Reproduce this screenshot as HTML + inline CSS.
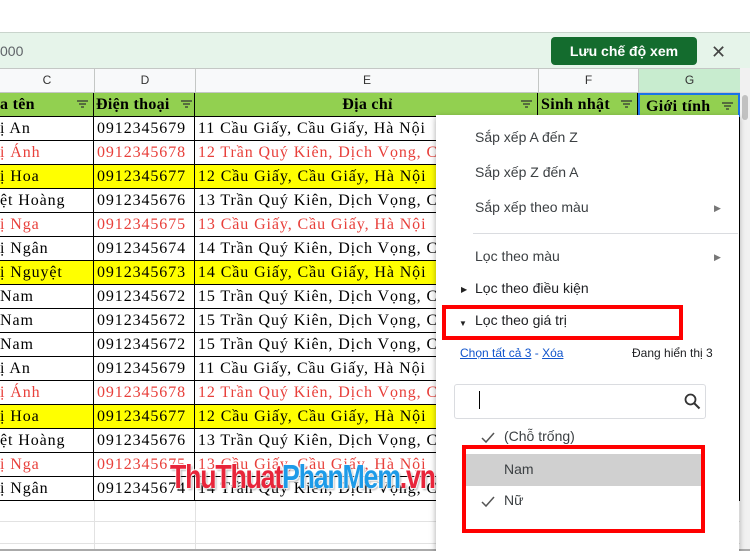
<!DOCTYPE html><html><head><meta charset="utf-8"><style>
*{box-sizing:border-box;margin:0;padding:0}
body{width:750px;height:551px;overflow:hidden;position:relative;background:#fff;font-family:"Liberation Sans",sans-serif}
.abs{position:absolute}
.row{position:absolute;left:0;width:740px;height:24px;font-family:"Liberation Serif",serif;font-size:16px;letter-spacing:0.9px;line-height:23px}
.row div{position:absolute;top:0;height:24px;border-right:1.5px solid #000;border-bottom:1.5px solid #000;padding-left:3px;white-space:nowrap;overflow:hidden}
.c{left:-20px;width:114px}.d{left:94px;width:101px}.e{left:195px;width:343px}.f{left:538px;width:100px}.g{left:638px;width:102px}
.y div{background:#ffff00}.r{color:#e8403b}
.fi{position:absolute;right:5px;top:6px;width:11px;height:10px}
.mi{position:absolute;left:475px;font-size:14px;color:#3c4043}
</style></head><body>
<div class="abs" style="left:0;top:0;width:750px;height:33px;background:#fff;border-bottom:1px solid #c9d4cc"></div>
<div class="abs" style="left:0;top:33px;width:750px;height:35px;background:#e6f4ea"></div>
<div class="abs" style="left:0;top:43px;font-size:14px;color:#5f6368">000</div>
<div class="abs" style="left:551px;top:37px;width:146px;height:28px;background:#146c2e;border-radius:4px;color:#fff;font-size:14px;font-weight:bold;text-align:center;line-height:28px">Lưu chế độ xem</div>
<div class="abs" style="left:711px;top:42px;font-size:18px;color:#444">✕</div>
<div class="abs" style="left:0;top:68px;width:740px;height:25px;background:#f8f9fa;border-top:1px solid #c4c7c5;border-bottom:1px solid #c4c7c5;font-size:12px;color:#333">
<div class="abs" style="left:0;width:94px;text-align:center;line-height:23px">C</div>
<div class="abs" style="left:94px;width:101px;border-left:1px solid #c4c7c5;height:23px;text-align:center;line-height:23px">D</div>
<div class="abs" style="left:195px;width:343px;border-left:1px solid #c4c7c5;height:23px;text-align:center;line-height:23px">E</div>
<div class="abs" style="left:538px;width:100px;border-left:1px solid #c4c7c5;height:23px;text-align:center;line-height:23px">F</div>
<div class="abs" style="left:638px;width:102px;border-left:1px solid #c4c7c5;height:23px;text-align:center;line-height:23px;background:#c8eccf">G</div>
</div>
<div class="abs" style="left:740px;top:68px;width:10px;height:483px;background:#f1f1f1"></div>
<div class="abs" style="left:742px;top:95px;width:6px;height:25px;background:#c1c1c1;border-radius:3px"></div>
<div class="row" style="top:93px;font-weight:bold;background:#92d050;letter-spacing:0.3px">
<div class="c" style="background:#92d050;padding-left:20px">a tên<svg class="fi" viewBox="0 0 11 10"><path d="M0 2h11M2 5h7M4 8h3" stroke="#333" stroke-width="1.2"/></svg></div>
<div class="d" style="background:#92d050;padding-left:2px">Điện thoại<svg class="fi" style="right:2px" viewBox="0 0 11 10"><path d="M0 2h11M2 5h7M4 8h3" stroke="#333" stroke-width="1.2"/></svg></div>
<div class="e" style="background:#92d050;text-align:center">Địa chỉ<svg class="fi" viewBox="0 0 11 10"><path d="M0 2h11M2 5h7M4 8h3" stroke="#333" stroke-width="1.2"/></svg></div>
<div class="f" style="background:#92d050">Sinh nhật<svg class="fi" viewBox="0 0 11 10"><path d="M0 2h11M2 5h7M4 8h3" stroke="#333" stroke-width="1.2"/></svg></div>
<div class="g" style="background:#92d050;border:2px solid #1a73e8;padding-left:6px">Giới tính<svg class="fi" viewBox="0 0 11 10"><path d="M0 2h11M2 5h7M4 8h3" stroke="#333" stroke-width="1.2"/></svg></div>
</div>
<div class="row" style="top:117px"><div class="c" style="padding-left:20px">ị An</div><div class="d">0912345679</div><div class="e">11 Cầu Giấy, Cầu Giấy, Hà Nội</div><div class="f"></div><div class="g"></div></div>
<div class="row r" style="top:141px"><div class="c" style="padding-left:20px">ị Ánh</div><div class="d">0912345678</div><div class="e">12 Trần Quý Kiên, Dịch Vọng, Cầu Giấy</div><div class="f"></div><div class="g"></div></div>
<div class="row y" style="top:165px"><div class="c" style="padding-left:20px">ị Hoa</div><div class="d">0912345677</div><div class="e">12 Cầu Giấy, Cầu Giấy, Hà Nội</div><div class="f"></div><div class="g"></div></div>
<div class="row" style="top:189px"><div class="c" style="padding-left:20px">ệt Hoàng</div><div class="d">0912345676</div><div class="e">13 Trần Quý Kiên, Dịch Vọng, Cầu Giấy</div><div class="f"></div><div class="g"></div></div>
<div class="row r" style="top:213px"><div class="c" style="padding-left:20px">ị Nga</div><div class="d">0912345675</div><div class="e">13 Cầu Giấy, Cầu Giấy, Hà Nội</div><div class="f"></div><div class="g"></div></div>
<div class="row" style="top:237px"><div class="c" style="padding-left:20px">ị Ngân</div><div class="d">0912345674</div><div class="e">14 Trần Quý Kiên, Dịch Vọng, Cầu Giấy</div><div class="f"></div><div class="g"></div></div>
<div class="row y" style="top:261px"><div class="c" style="padding-left:20px">ị Nguyệt</div><div class="d">0912345673</div><div class="e">14 Cầu Giấy, Cầu Giấy, Hà Nội</div><div class="f"></div><div class="g"></div></div>
<div class="row" style="top:285px"><div class="c" style="padding-left:20px">Nam</div><div class="d">0912345672</div><div class="e">15 Trần Quý Kiên, Dịch Vọng, Cầu Giấy</div><div class="f"></div><div class="g"></div></div>
<div class="row" style="top:309px"><div class="c" style="padding-left:20px">Nam</div><div class="d">0912345672</div><div class="e">15 Trần Quý Kiên, Dịch Vọng, Cầu Giấy</div><div class="f"></div><div class="g"></div></div>
<div class="row" style="top:333px"><div class="c" style="padding-left:20px">Nam</div><div class="d">0912345672</div><div class="e">15 Trần Quý Kiên, Dịch Vọng, Cầu Giấy</div><div class="f"></div><div class="g"></div></div>
<div class="row" style="top:357px"><div class="c" style="padding-left:20px">ị An</div><div class="d">0912345679</div><div class="e">11 Cầu Giấy, Cầu Giấy, Hà Nội</div><div class="f"></div><div class="g"></div></div>
<div class="row r" style="top:381px"><div class="c" style="padding-left:20px">ị Ánh</div><div class="d">0912345678</div><div class="e">12 Trần Quý Kiên, Dịch Vọng, Cầu Giấy</div><div class="f"></div><div class="g"></div></div>
<div class="row y" style="top:405px"><div class="c" style="padding-left:20px">ị Hoa</div><div class="d">0912345677</div><div class="e">12 Cầu Giấy, Cầu Giấy, Hà Nội</div><div class="f"></div><div class="g"></div></div>
<div class="row" style="top:429px"><div class="c" style="padding-left:20px">ệt Hoàng</div><div class="d">0912345676</div><div class="e">13 Trần Quý Kiên, Dịch Vọng, Cầu Giấy</div><div class="f"></div><div class="g"></div></div>
<div class="row r" style="top:453px"><div class="c" style="padding-left:20px">ị Nga</div><div class="d">0912345675</div><div class="e">13 Cầu Giấy, Cầu Giấy, Hà Nội</div><div class="f"></div><div class="g"></div></div>
<div class="row" style="top:477px"><div class="c" style="padding-left:20px">ị Ngân</div><div class="d">0912345674</div><div class="e">14 Trần Quý Kiên, Dịch Vọng, Cầu Giấy</div><div class="f"></div><div class="g"></div></div>
<div class="abs" style="left:0;top:521px;width:740px;height:1px;background:#e2e2e2"></div>
<div class="abs" style="left:0;top:543px;width:740px;height:1px;background:#e2e2e2"></div>
<div class="abs" style="left:94px;top:501px;width:1px;height:50px;background:#e2e2e2"></div>
<div class="abs" style="left:195px;top:501px;width:1px;height:50px;background:#e2e2e2"></div>
<div class="abs" style="left:0;top:549px;width:750px;height:2px;background:#aaa"></div>
<div class="abs" style="left:436px;top:115px;width:303px;height:436px;background:#fff;box-shadow:0 2px 6px rgba(0,0,0,.35)"></div>
<div class="abs" style="left:170px;top:458px;font-size:33px;font-weight:bold;letter-spacing:-1.5px;transform:scaleX(0.81);transform-origin:left;white-space:nowrap;text-shadow:1px 1px 1px #fff,-1px -1px 1px #fff,2px 2px 2px rgba(0,0,0,.3)"><span style="color:#e8253a">ThuThuat</span><span style="color:#1e9be8">PhanMem</span><span style="color:#e8253a">.vn</span></div>
<div class="mi" style="top:129px">Sắp xếp A đến Z</div>
<div class="mi" style="top:164px">Sắp xếp Z đến A</div>
<div class="mi" style="top:199px">Sắp xếp theo màu</div>
<div class="abs" style="left:714px;top:203px;font-size:9px;color:#777">▶</div>
<div class="abs" style="left:473px;top:233px;width:265px;height:1px;background:#dadce0"></div>
<div class="mi" style="top:248px">Lọc theo màu</div>
<div class="abs" style="left:714px;top:252px;font-size:9px;color:#777">▶</div>
<div class="abs" style="left:461px;top:285px;font-size:8px;color:#222">▶</div>
<div class="mi" style="top:280px;color:#202124">Lọc theo điều kiện</div>
<div class="abs" style="left:459px;top:319px;font-size:8px;color:#222">▼</div>
<div class="mi" style="top:312px;color:#202124">Lọc theo giá trị</div>
<div class="abs" style="left:442px;top:305px;width:241px;height:35px;border:4px solid #f00"></div>
<div class="abs" style="left:460px;top:346px;font-size:12px;color:#1155cc"><u>Chọn tất cả 3</u> - <u>Xóa</u></div>
<div class="abs" style="left:632px;top:346px;font-size:12px;color:#202124">Đang hiển thị 3</div>
<div class="abs" style="left:454px;top:384px;width:252px;height:35px;border:1px solid #dadce0;border-radius:3px"></div>
<div class="abs" style="left:479px;top:391px;width:1px;height:18px;background:#000"></div>
<svg class="abs" style="left:684px;top:393px" width="17" height="17" viewBox="0 0 17 17"><circle cx="6.5" cy="6.5" r="5" fill="none" stroke="#333" stroke-width="1.8"/><path d="M10 10l5.5 5.5" stroke="#333" stroke-width="2"/></svg>
<svg class="abs" style="left:481px;top:432px" width="14" height="12" viewBox="0 0 14 12"><path d="M1 6l4 4 8-9" fill="none" stroke="#555" stroke-width="1.5"/></svg>
<div class="abs" style="left:504px;top:428px;font-size:14px;color:#3c4043">(Chỗ trống)</div>
<div class="abs" style="left:466px;top:454px;width:235px;height:32px;background:#d0d0d0"></div>
<div class="abs" style="left:504px;top:461px;font-size:14px;color:#3c4043">Nam</div>
<svg class="abs" style="left:481px;top:496px" width="14" height="12" viewBox="0 0 14 12"><path d="M1 6l4 4 8-9" fill="none" stroke="#555" stroke-width="1.5"/></svg>
<div class="abs" style="left:504px;top:492px;font-size:14px;color:#3c4043">Nữ</div>
<div class="abs" style="left:462px;top:445px;width:243px;height:88px;border:4px solid #f00"></div>
</body></html>
